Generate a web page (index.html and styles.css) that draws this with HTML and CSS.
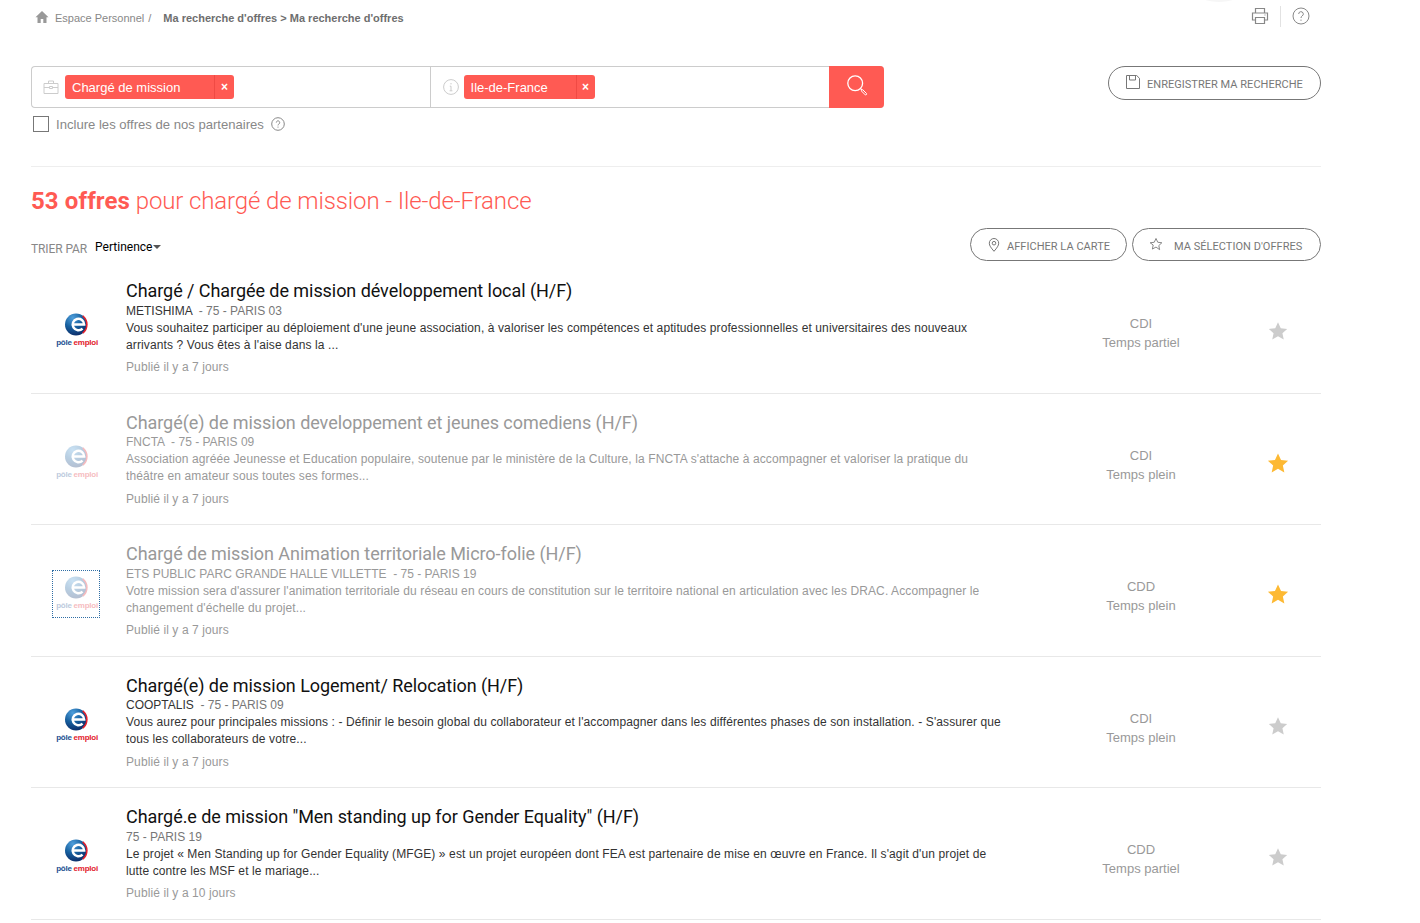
FILE: index.html
```html
<!DOCTYPE html>
<html lang="fr">
<head>
  <meta charset="UTF-8" />
  <title>Ma recherche d'offres</title>
  <link rel="stylesheet" href="styles.css">
</head>
<body>

<svg class="defs" width="0" height="0">
  <defs>
    <radialGradient id="ball" cx="35%" cy="20%" r="85%">
      <stop offset="0" stop-color="#4f9fdc"/>
      <stop offset="0.5" stop-color="#17609f"/>
      <stop offset="1" stop-color="#0b2a66"/>
    </radialGradient>
    <symbol id="pe-logo" viewBox="0 0 24 24">
      <circle cx="11.5" cy="12" r="11.5" fill="url(#ball)"/>
      <path d="M18.5 3 A11.5 11.5 0 0 1 18.5 21" fill="none" stroke="#e2202c" stroke-width="1.6"/>
      <path d="M8.2 12 H20 A6 6 0 1 0 18.3 16.2" fill="none" stroke="#fff" stroke-width="2.6"/>
    </symbol>
    <symbol id="star-solid" viewBox="0 0 24 24">
      <path d="M12 1.5l3.3 7.1 7.7.9-5.7 5.2 1.6 7.6L12 18.4l-6.9 3.9 1.6-7.6L1 9.5l7.7-.9z"/>
    </symbol>
  </defs>
</svg>

<div class="top-glow"></div>

<div class="page">

  <div class="topbar">
    <nav class="crumbs">
      <svg class="home" viewBox="0 0 14 14"><path d="M7 1L0.5 7.2h2V13h3.2V9h2.6v4h3.2V7.2h2z"/></svg>
      <span class="crumb">Espace Personnel</span>
      <span class="crumb-sep">/</span>
      <b class="crumb-current">Ma recherche d'offres &gt; Ma recherche d'offres</b>
    </nav>
    <div class="tools">
      <svg class="tool-icon" viewBox="0 0 18 18" fill="none" stroke="#888" stroke-width="1.2"><path d="M4.5 6V1.5h9V6M4.5 13H1.5V6h15v7h-3"/><path d="M4.5 10.5h9v6h-9z"/><path d="M13.5 8h1"/></svg>
      <span class="tool-sep"></span>
      <svg class="tool-icon" viewBox="0 0 18 18" fill="none" stroke="#888" stroke-width="1"><circle cx="9" cy="9" r="8"/><path d="M6.7 7a2.3 2.3 0 1 1 3.4 2c-.8.5-1.1 1-1.1 2"/><path d="M9 12.6v1.2"/></svg>
    </div>
  </div>

  <div class="search-row">
    <div>
      <form class="search">
        <div class="field field-job">
          <svg class="field-icon" viewBox="0 0 16 16" fill="none" stroke="#ccc"><path d="M1 4.5h14v10H1zM5.5 4.5V2h5v2.5M1 8.5h5.5M9.5 8.5H15"/><path d="M6.5 7.5h3v2h-3z"/></svg>
          <span class="tag tag-job"><span class="tag-label">Chargé de mission</span><span class="tag-x">×</span></span>
        </div>
        <div class="field field-place">
          <svg class="field-icon round" viewBox="0 0 16 16" fill="none" stroke="#ccc"><circle cx="8" cy="8" r="7.4"/><path d="M8 4v1.4M6.8 7.2H8v4.6M6.6 11.8h2.8"/></svg>
          <span class="tag tag-place"><span class="tag-label">Ile-de-France</span><span class="tag-x">×</span></span>
        </div>
        <button class="search-btn" type="button">
          <svg viewBox="0 0 21 21" fill="none" stroke="#fff"><circle cx="8.2" cy="8.2" r="7.4" stroke-width="1.3"/><path d="M13.6 13.6l1.6 1.6" stroke-width="1.1"/><path d="M15.6 14.6l4 4a1 1 0 0 1-1.3 1.3l-4-4z" stroke-width="1"/></svg>
        </button>
      </form>
      <label class="partners">
        <span class="checkbox"></span>
        <span>Inclure les offres de nos partenaires</span>
        <svg class="help-small" viewBox="0 0 14 14" fill="none" stroke="#888"><circle cx="7" cy="7" r="6.3"/><path d="M5.3 5.5a1.7 1.7 0 1 1 2.6 1.5c-.6.4-.9.7-.9 1.4M7 9.6v1"/></svg>
      </label>
    </div>
    <a class="pill pill-save">
      <svg class="pill-icon" viewBox="0 0 14 14" fill="none" stroke="#777"><path d="M.5.5h10.2l2.8 2.8v10.2H.5z"/><path d="M3.5.5v4.5h6V.5"/></svg>
      <span>Enregistrer ma recherche</span>
    </a>
  </div>

  <h1 class="results-title"><strong>53 offres</strong> pour chargé de mission - Ile-de-France</h1>

  <div class="sort-row">
    <div class="sort">
      <span class="sort-label">Trier par</span>
      <span class="sort-value">Pertinence<i class="caret"></i></span>
    </div>
    <div class="sort-actions">
      <a class="pill pill-map">
        <svg class="pill-icon" viewBox="0 0 12 14" fill="none" stroke="#777"><path d="M6 13.3C3 9.8 1.3 7.6 1.3 5.2a4.7 4.7 0 0 1 9.4 0c0 2.4-1.7 4.6-4.7 8.1z"/><circle cx="6" cy="5.2" r="1.8"/></svg>
        <span>Afficher la carte</span>
      </a>
      <a class="pill pill-fav">
        <svg class="pill-icon star-line" viewBox="0 0 24 24" fill="none" stroke="#777" stroke-width="1.5"><path d="M12 2.5l3 6.5 7 .9-5.2 4.8 1.4 7L12 17.2l-6.2 3.5 1.4-7L2 9.9 9 9z"/></svg>
        <span>Ma sélection d'offres</span>
      </a>
    </div>
  </div>

  <ul class="jobs">
    <li class="job">
      <div class="job-logo"><svg><use href="#pe-logo" width="23" height="23" x="12" y="0"/></svg><span class="logo-text"><span>pôle</span> <em>emploi</em></span></div>
      <div class="job-body">
        <h2>Chargé / Chargée de mission développement local (H/F)</h2>
        <p class="job-meta"><span class="company">METISHIMA</span> &nbsp;- 75 - PARIS 03</p>
        <p class="job-desc">Vous souhaitez participer au déploiement d'une jeune association, à valoriser les compétences et aptitudes professionnelles et universitaires des nouveaux arrivants ? Vous êtes à l'aise dans la ...</p>
        <p class="job-date">Publié il y a 7 jours</p>
      </div>
      <div class="job-contract">CDI<br>Temps partiel</div>
      <div class="job-star"><svg><use href="#star-solid"/></svg></div>
    </li>

    <li class="job seen">
      <div class="job-logo"><svg><use href="#pe-logo" width="23" height="23" x="12" y="0"/></svg><span class="logo-text"><span>pôle</span> <em>emploi</em></span></div>
      <div class="job-body">
        <h2>Chargé(e) de mission developpement et jeunes comediens (H/F)</h2>
        <p class="job-meta"><span class="company">FNCTA</span> &nbsp;- 75 - PARIS 09</p>
        <p class="job-desc">Association agréée Jeunesse et Education populaire, soutenue par le ministère de la Culture, la FNCTA s'attache à accompagner et valoriser la pratique du théâtre en amateur sous toutes ses formes...</p>
        <p class="job-date">Publié il y a 7 jours</p>
      </div>
      <div class="job-contract">CDI<br>Temps plein</div>
      <div class="job-star saved"><svg><use href="#star-solid"/></svg></div>
    </li>

    <li class="job seen focused">
      <div class="job-logo"><svg><use href="#pe-logo" width="23" height="23" x="12" y="0"/></svg><span class="logo-text"><span>pôle</span> <em>emploi</em></span></div>
      <div class="job-body">
        <h2>Chargé de mission Animation territoriale Micro-folie (H/F)</h2>
        <p class="job-meta"><span class="company">ETS PUBLIC PARC GRANDE HALLE VILLETTE</span> &nbsp;- 75 - PARIS 19</p>
        <p class="job-desc">Votre mission sera d'assurer l'animation territoriale du réseau en cours de constitution sur le territoire national en articulation avec les DRAC. Accompagner le changement d'échelle du projet...</p>
        <p class="job-date">Publié il y a 7 jours</p>
      </div>
      <div class="job-contract">CDD<br>Temps plein</div>
      <div class="job-star saved"><svg><use href="#star-solid"/></svg></div>
    </li>

    <li class="job">
      <div class="job-logo"><svg><use href="#pe-logo" width="23" height="23" x="12" y="0"/></svg><span class="logo-text"><span>pôle</span> <em>emploi</em></span></div>
      <div class="job-body">
        <h2>Chargé(e) de mission Logement/ Relocation (H/F)</h2>
        <p class="job-meta"><span class="company">COOPTALIS</span> &nbsp;- 75 - PARIS 09</p>
        <p class="job-desc">Vous aurez pour principales missions : - Définir le besoin global du collaborateur et l'accompagner dans les différentes phases de son installation. - S'assurer que tous les collaborateurs de votre...</p>
        <p class="job-date">Publié il y a 7 jours</p>
      </div>
      <div class="job-contract">CDI<br>Temps plein</div>
      <div class="job-star"><svg><use href="#star-solid"/></svg></div>
    </li>

    <li class="job">
      <div class="job-logo"><svg><use href="#pe-logo" width="23" height="23" x="12" y="0"/></svg><span class="logo-text"><span>pôle</span> <em>emploi</em></span></div>
      <div class="job-body">
        <h2>Chargé.e de mission "Men standing up for Gender Equality" (H/F)</h2>
        <p class="job-meta">75 - PARIS 19</p>
        <p class="job-desc">Le projet « Men Standing up for Gender Equality (MFGE) » est un projet européen dont FEA est partenaire de mise en œuvre en France. Il s'agit d'un projet de lutte contre les MSF et le mariage...</p>
        <p class="job-date">Publié il y a 10 jours</p>
      </div>
      <div class="job-contract">CDD<br>Temps partiel</div>
      <div class="job-star"><svg><use href="#star-solid"/></svg></div>
    </li>
  </ul>

</div>

</body>
</html>
```

FILE: styles.css
```css
html, body {
  height: 923px;
  overflow: hidden;
}
body {
  margin: 0;
  background: #fff;
  color: #333;
  font-family: "Liberation Sans", Arial, sans-serif;
  font-size: 12px;
  position: relative;
}
.defs {
  position: absolute;
}
.top-glow {
  position: absolute;
  top: -8px;
  left: 1202px;
  width: 34px;
  height: 10px;
  border-radius: 50%;
  background: #f6f6f6;
}
.page {
  width: 1290px;
  margin-left: 31px;
}

/* top bar */
.topbar {
  display: flex;
  justify-content: space-between;
  height: 66px;
}
.crumbs {
  display: flex;
  align-items: center;
  height: 36px;
  padding-left: 4px;
  font-size: 11px;
  color: #888;
}
.home {
  width: 14px;
  height: 14px;
  fill: #999;
  margin-top: -3px;
  margin-right: 6px;
}
.crumb-sep {
  margin-left: 4px;
  margin-right: 12px;
}
.crumb-current {
  color: #6e6e6e;
}
.tools {
  display: flex;
  align-items: center;
  height: 32px;
  padding-right: 11px;
}
.tool-icon {
  width: 18px;
  height: 18px;
}
.tool-sep {
  width: 1px;
  height: 21px;
  background: #e2e2e2;
  margin: 0 11px;
}

/* search */
.search-row {
  display: flex;
  justify-content: space-between;
  align-items: flex-start;
  height: 100px;
  border-bottom: 1px solid #eee;
}
.search {
  display: flex;
  width: 853px;
  height: 42px;
  box-sizing: border-box;
  border: 1px solid #ccc;
  border-right: 0;
  border-radius: 4px;
}
.field {
  display: flex;
  align-items: center;
  width: 399px;
  box-sizing: border-box;
}
.field-job {
  padding-left: 11px;
  border-right: 1px solid #ccc;
}
.field-place {
  padding-left: 12px;
}
.field-icon {
  width: 16px;
  height: 16px;
  margin-right: 6px;
}
.field-icon.round {
  margin-right: 5px;
}
.tag {
  display: flex;
  height: 24px;
  background: #ff5a53;
  color: #fff;
  border-radius: 3px;
  font-size: 13px;
  line-height: 25px;
}
.tag-label {
  padding-left: 7px;
  border-right: 1px solid #f04a44;
}
.tag-job .tag-label {
  width: 142px;
}
.tag-place .tag-label {
  width: 105px;
}
.tag-x {
  flex: 1;
  text-align: center;
  font-size: 12px;
  font-weight: bold;
}
.tag-job {
  width: 169px;
}
.tag-place {
  width: 131px;
}
.search-btn {
  display: flex;
  align-items: center;
  width: 55px;
  height: 42px;
  margin: -1px 0 0 auto;
  padding: 0 0 0 18px;
  border: 0;
  border-radius: 0 4px 4px 0;
  background: #ff5a53;
}
.search-btn svg {
  display: block;
  width: 21px;
  height: 21px;
  margin-top: -3px;
}
.partners {
  display: flex;
  align-items: center;
  margin: 8px 0 0 2px;
  color: #888;
  font-size: 13.1px;
}
.checkbox {
  width: 16px;
  height: 16px;
  box-sizing: border-box;
  border: 1px solid #777;
  margin-right: 7px;
}
.help-small {
  width: 14px;
  height: 14px;
  margin-left: 7px;
}

/* pills */
.pill {
  display: flex;
  align-items: center;
  box-sizing: border-box;
  height: 33px;
  border: 1px solid #777;
  border-radius: 17px;
  font-family: Roboto, sans-serif;
  font-size: 11px;
  letter-spacing: .03px;
  color: #777;
  text-transform: uppercase;
}
.pill span {
  padding-top: 3px;
}
.pill-icon {
  width: 14px;
  height: 14px;
}
.pill-save {
  width: 213px;
  height: 34px;
  padding-left: 17px;
}
.pill-save .pill-icon {
  margin-right: 7px;
  margin-top: -3px;
}
.pill-map {
  width: 157px;
  padding-left: 16px;
}
.pill-map .pill-icon {
  margin-right: 6px;
}
.pill-fav {
  width: 189px;
  padding-left: 16px;
}
.pill-fav .pill-icon {
  margin-right: 11px;
  margin-top: -1px;
}

/* results header */
.results-title {
  margin: 18px 0 0;
  height: 32px;
  font-family: Roboto, sans-serif;
  font-size: 24px;
  line-height: 32px;
  font-weight: 300;
  letter-spacing: -.12px;
  color: #ff5a53;
}
.results-title strong {
  font-weight: 700;
  letter-spacing: .1px;
}
.sort-row {
  display: flex;
  justify-content: space-between;
  height: 34px;
  margin-top: 11px;
}
.sort {
  display: flex;
  padding-top: 12px;
  font-family: Roboto, sans-serif;
}
.sort-label {
  font-size: 12px;
  line-height: 18px;
  letter-spacing: -.1px;
  color: #888;
  text-transform: uppercase;
}
.sort-value {
  margin-left: 8px;
  font-size: 12px;
  line-height: 15px;
  color: #000;
}
.caret {
  display: inline-block;
  margin-left: 1px;
  vertical-align: 2px;
  border-top: 4px solid #555;
  border-left: 4px solid transparent;
  border-right: 4px solid transparent;
}
.sort-actions {
  display: flex;
  gap: 5px;
}

/* job list */
.jobs {
  list-style: none;
  margin: 0;
  padding: 0;
}
.job {
  display: flex;
  height: 131.5px;
  box-sizing: border-box;
  border-bottom: 1px solid #e8e8e8;
}
.job-logo {
  position: relative;
  width: 95px;
  box-sizing: border-box;
  padding: 51px 0 0 22px;
}
.job-logo svg {
  display: block;
  width: 48px;
  height: 23px;
}
.logo-text {
  display: block;
  width: 48px;
  margin-top: 1px;
  text-align: center;
  font-size: 8px;
  font-weight: bold;
  line-height: 11px;
  letter-spacing: -.25px;
  color: #1d4f91;
  white-space: nowrap;
}
.logo-text em {
  font-style: normal;
  color: #e2202c;
}
.job-body {
  width: 880px;
  padding-top: 18px;
}
.job-body h2 {
  margin: 0;
  font-family: Roboto, sans-serif;
  font-size: 18px;
  line-height: 21px;
  font-weight: 400;
  letter-spacing: -.06px;
  color: #111;
}
.job-meta {
  margin: 1.5px 0 0;
  font-size: 12px;
  line-height: 17px;
  color: #777;
}
.company {
  color: #333;
}
.job-desc {
  margin: 0;
  line-height: 17.3px;
  letter-spacing: .11px;
  color: #333;
}
.job-date {
  margin: 5px 0 0;
  line-height: 17px;
  letter-spacing: .1px;
  color: #999;
}
.job-contract {
  width: 180px;
  margin-left: 45px;
  padding-top: 52px;
  text-align: center;
  font-size: 13px;
  line-height: 19px;
  color: #999;
}
.job-star {
  width: 83px;
  margin-left: 5px;
  padding-top: 59px;
  text-align: center;
}
.job-star svg {
  width: 20px;
  height: 20px;
  fill: #ccc;
}
.job-star.saved svg {
  width: 22px;
  height: 22px;
  margin-top: -1px;
  fill: #fdb933;
}

/* already read offers */
.seen h2,
.seen .job-meta,
.seen .company,
.seen .job-desc {
  color: #999;
}
.seen .job-logo svg,
.seen .logo-text {
  opacity: .3;
}
.focused .job-logo::after {
  content: "";
  position: absolute;
  top: 45px;
  left: 21px;
  width: 48px;
  height: 48px;
  box-sizing: border-box;
  border: 1px dotted #2f6ea5;
}
```
